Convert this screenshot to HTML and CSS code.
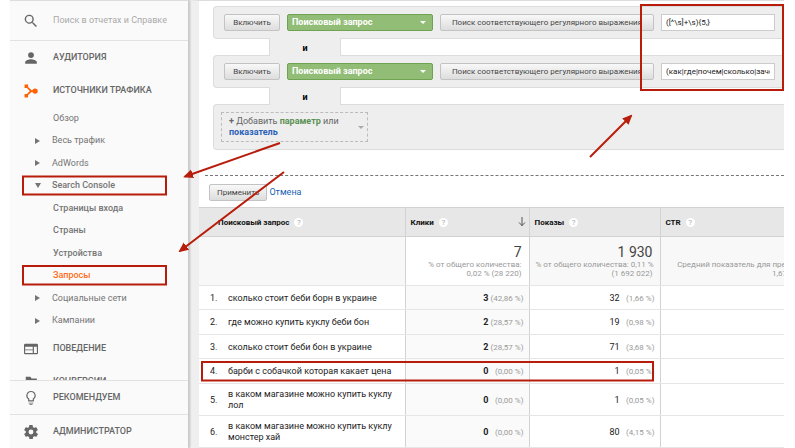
FILE: index.html
```
<!DOCTYPE html>
<html lang="ru">
<head>
    <meta charset="UTF-8">
    <meta name="viewport" content="width=device-width, initial-scale=1.0">
    <title>Поисковые запросы</title>
    <link rel="stylesheet" href="styles.css">
</head>
<body>
    <div class="app">
        <aside class="sidebar">
            <div class="search">
                <svg class="icon" viewBox="2 2 20 20"><path d="M15.500 14h-.8l-.3-.3A6.500 6.500 0 1 0 13.700 14.400l.3.3v.8l5 5 1.500-1.500-5-5zm-6 0a4.500 4.500 0 1 1 0-9 4.500 4.500 0 0 1 0 9z"/></svg>
                <input type="text" placeholder="Поиск в отчетах и Справке" aria-label="Поиск">
            </div>
            <nav class="menu">
                <a href="#" class="section">
                    <svg class="icon" viewBox="0 0 24 24"><circle cx="12" cy="7" r="5"/><path d="M2 22v-3c0-3.300 6.500-5 10-5s10 1.700 10 5v3z"/></svg>
                    АУДИТОРИЯ
                </a>
                <a href="#" class="section">
                    <svg class="icon icon-orange" viewBox="0 0 24 24"><path d="M1 1h6v4l6 5.500h4v3h-4L7 19v4H1v-6h4l5-5-5-5H1z"/><circle cx="19" cy="12" r="4.500"/></svg>
                    ИСТОЧНИКИ ТРАФИКА
                </a>
                <ul class="submenu">
                    <li><a href="#">Обзор</a></li>
                    <li><a href="#" class="closed">Весь трафик</a></li>
                    <li><a href="#" class="closed">AdWords</a></li>
                    <li><a href="#" class="open">Search Console</a></li>
                    <li><a href="#" class="child">Страницы входа</a></li>
                    <li><a href="#" class="child">Страны</a></li>
                    <li><a href="#" class="child">Устройства</a></li>
                    <li><a href="#" class="child current">Запросы</a></li>
                    <li><a href="#" class="closed">Социальные сети</a></li>
                    <li><a href="#" class="closed">Кампании</a></li>
                </ul>
                <a href="#" class="section">
                    <svg class="icon" viewBox="0 0 24 24"><path fill-rule="evenodd" d="M2 3h20a2 2 0 0 1 2 2v14a2 2 0 0 1-2 2H2a2 2 0 0 1-2-2V5a2 2 0 0 1 2-2zm0 5v5h13V8zm0 6v5h13v-5zm15-6v11h5V8z"/></svg>
                    ПОВЕДЕНИЕ
                </a>
                <a href="#" class="section">
                    <svg class="icon" viewBox="0 0 24 24"><path d="M3 3h8l2 3h9v15H3z"/></svg>
                    КОНВЕРСИИ
                </a>
            </nav>
            <div class="sidebar-footer">
                <a href="#" class="section">
                    <svg class="icon" viewBox="0 0 24 24"><path fill-rule="evenodd" d="M12 0a8 8 0 0 0-5 14.300V17a1 1 0 0 0 1 1h8a1 1 0 0 0 1-1v-2.700A8 8 0 0 0 12 0zm3 13v3H9v-3a6 6 0 1 1 6 0z"/><path d="M8 20h8v1.500H8zM9.500 22.500h5V24h-5z"/></svg>
                    РЕКОМЕНДУЕМ
                </a>
                <a href="#" class="section">
                    <svg class="icon" viewBox="2 2 20 20"><path fill-rule="evenodd" d="M19.400 13c.1-.7.1-1.300 0-2l2.100-1.600a.5.5 0 0 0 .1-.6l-2-3.500a.5.5 0 0 0-.6-.2l-2.500 1a7 7 0 0 0-1.700-1L14.400 2.400A.5.5 0 0 0 14 2h-4a.5.5 0 0 0-.5.4l-.4 2.700a7 7 0 0 0-1.700 1L5 5.100a.5.5 0 0 0-.6.2l-2 3.500a.5.5 0 0 0 .1.600L4.600 11a8 8 0 0 0 0 2l-2.100 1.600a.5.5 0 0 0-.1.600l2 3.500c.1.2.4.3.6.2l2.500-1a7 7 0 0 0 1.700 1l.4 2.700c0 .2.2.4.5.4h4c.2 0 .4-.2.500-.4l.4-2.700a7 7 0 0 0 1.700-1l2.500 1c.2.1.5 0 .6-.2l2-3.500a.5.5 0 0 0-.1-.6zM12 15.500a3.500 3.500 0 1 1 0-7 3.500 3.500 0 0 1 0 7z"/></svg>
                    АДМИНИСТРАТОР
                </a>
            </div>
        </aside>

        <main class="content">
            <div class="filters">
                <div class="filter">
                    <button type="button" class="btn">Включить</button>
                    <div class="dimension">
                        <select aria-label="Параметр">
                            <option>Поисковый запрос</option>
                        </select>
                    </div>
                    <button type="button" class="btn operator">Поиск соответствующего регулярного выражения</button>
                    <input type="text" class="pattern" aria-label="Выражение" value="([^\s]+\s){5,}">
                </div>
                <div class="and">и</div>
                <div class="filter">
                    <button type="button" class="btn">Включить</button>
                    <div class="dimension">
                        <select aria-label="Параметр">
                            <option>Поисковый запрос</option>
                        </select>
                    </div>
                    <button type="button" class="btn operator">Поиск соответствующего регулярного выражения</button>
                    <input type="text" class="pattern" aria-label="Выражение" value="(как|где|почем|сколько|зачем)">
                </div>
                <div class="and">и</div>
                <div class="filter filter-new">
                    <button type="button" class="add">
                        <span><b>+</b> Добавить <b class="green">параметр</b> или <b class="blue">показатель</b></span>
                    </button>
                </div>
            </div>

            <div class="actions">
                <button type="button" class="btn">Применить</button>
                <a href="#">Отмена</a>
            </div>

            <table class="report">
                <colgroup>
                    <col class="col-query">
                    <col class="col-clicks">
                    <col class="col-shows">
                    <col>
                </colgroup>
                <thead>
                    <tr>
                        <th class="query-head"><div class="head">Поисковый запрос <span class="help">?</span></div></th>
                        <th>
                            <div class="head">Клики <span class="help">?</span>
                                <svg class="sort" viewBox="0 0 8 10"><path d="M4 0v9M1 5.500l3 3 3-3"/></svg>
                            </div>
                        </th>
                        <th><div class="head">Показы <span class="help">?</span></div></th>
                        <th><div class="head">CTR <span class="help">?</span></div></th>
                    </tr>
                </thead>
                <tbody>
                    <tr class="summary">
                        <td></td>
                        <td class="sorted"><strong>7</strong>% от общего количества:<br>0,02 % (28 220)</td>
                        <td><strong>1 930</strong>% от общего количества: 0,11 %<br>(1 692 022)</td>
                        <td><strong>0,36 %</strong>Средний показатель для представления:<br>1,67 % (-78,24 %)</td>
                    </tr>
                    <tr>
                        <td><div class="query"><span>1.</span>сколько стоит беби борн в украине</div></td>
                        <td class="sorted"><b>3</b><small>(42,86 %)</small></td>
                        <td>32<small>(1,66 %)</small></td>
                        <td></td>
                    </tr>
                    <tr>
                        <td><div class="query"><span>2.</span>где можно купить куклу беби бон</div></td>
                        <td class="sorted"><b>2</b><small>(28,57 %)</small></td>
                        <td>19<small>(0,98 %)</small></td>
                        <td></td>
                    </tr>
                    <tr>
                        <td><div class="query"><span>3.</span>сколько стоит беби бон в украине</div></td>
                        <td class="sorted"><b>2</b><small>(28,57 %)</small></td>
                        <td>71<small>(3,68 %)</small></td>
                        <td></td>
                    </tr>
                    <tr>
                        <td><div class="query"><span>4.</span>барби с собачкой которая какает цена</div></td>
                        <td class="sorted"><b>0</b><small>(0,00 %)</small></td>
                        <td>1<small>(0,05 %)</small></td>
                        <td></td>
                    </tr>
                    <tr class="tall">
                        <td><div class="query"><span>5.</span>в каком магазине можно купить куклу лол</div></td>
                        <td class="sorted"><b>0</b><small>(0,00 %)</small></td>
                        <td>1<small>(0,05 %)</small></td>
                        <td></td>
                    </tr>
                    <tr class="tall">
                        <td><div class="query"><span>6.</span>в каком магазине можно купить куклу монстер хай</div></td>
                        <td class="sorted"><b>0</b><small>(0,00 %)</small></td>
                        <td>80<small>(4,15 %)</small></td>
                        <td></td>
                    </tr>
                </tbody>
            </table>
        </main>
    </div>

    <!-- Red marks over the report -->
    <svg class="marks" width="795" height="448" viewBox="0 0 795 448">
        <defs>
            <marker id="tip" markerUnits="userSpaceOnUse" markerWidth="10" markerHeight="10" refX="8" refY="4.500" orient="auto">
                <path class="tip" d="M0 0l10 4.500-10 4.500z"/>
            </marker>
        </defs>
        <rect x="641" y="5" width="142" height="85"/>
        <rect x="23" y="176.500" width="143" height="18"/>
        <rect x="23" y="266" width="143" height="18.500"/>
        <rect x="202" y="362" width="451" height="18.500"/>
        <path marker-end="url(#tip)" d="M280 143L185 176.500"/>
        <path marker-end="url(#tip)" d="M284 172L180 251"/>
        <path marker-end="url(#tip)" d="M590 157L631 116"/>
    </svg>
</body>
</html>
```
FILE: styles.css
```
* {
    margin: 0;
    padding: 0;
    box-sizing: border-box;
}
body {
    background: #fff;
    color: #222;
    font-family: Roboto, "Liberation Sans", sans-serif;
    font-size: 9px;
    line-height: 11px;
    height: 100vh;
    overflow: hidden;
}
button, input, select {
    font: inherit;
    color: inherit;
}
a {
    text-decoration: none;
}
.app {
    display: flex;
    height: 100vh;
    margin: 0 11px 0 10px;
}

/* Sidebar */
.sidebar {
    flex: 0 0 179px;
    min-width: 0;
    display: flex;
    flex-direction: column;
    background: #fafafa;
    color: #666;
    border-top: 1px solid #ddd;
    border-right: 1px solid #ccc;
    box-shadow: 1px 0 2px rgba(0, 0, 0, 0.2);
    z-index: 1;
}
.icon {
    flex: 0 0 14px;
    height: 14px;
    margin-right: 15px;
    fill: #666;
}
.icon-orange {
    fill: #ff6000;
}
.search {
    display: flex;
    align-items: center;
    height: 40px;
    padding: 0 21px 0 14px;
    border-bottom: 1px solid #e2e2e2;
}
.search input {
    flex: 1;
    min-width: 0;
    border: none;
    background: none;
    outline: none;
}
.search input::placeholder {
    color: #aaa;
}
.menu {
    flex: 1;
    min-height: 0;
    overflow: hidden;
}
.section {
    display: flex;
    align-items: center;
    height: 33px;
    padding-left: 14px;
    color: #666;
    font-weight: 500;
}
.submenu {
    list-style: none;
}
.submenu a {
    display: flex;
    align-items: center;
    height: 22px;
    padding-left: 43px;
    color: #757575;
}
.submenu li:nth-child(even) a {
    height: 23px;
}
.submenu .closed,
.submenu .open {
    padding-left: 25px;
}
.closed::before {
    content: "";
    margin-right: 12px;
    border-left: 5px solid #757575;
    border-top: 3px solid transparent;
    border-bottom: 3px solid transparent;
}
.open::before {
    content: "";
    margin-right: 11px;
    border-top: 5px solid #757575;
    border-left: 3px solid transparent;
    border-right: 3px solid transparent;
}
.submenu .open,
.submenu .child {
    font-weight: 500;
}
.submenu .current {
    color: #ff6c1a;
}
.sidebar-footer .section {
    height: 34px;
    border-top: 1px solid #e2e2e2;
}

/* Filters */
.content {
    flex: 1;
    min-width: 0;
    overflow: hidden;
    border-left: 10px solid #efefef;
    border-top: 1px solid #ddd;
}
.filters {
    padding: 5px 0 0 14px;
}
.filter {
    display: flex;
    align-items: center;
    gap: 7px;
    height: 33px;
    padding: 0 9px 0 10px;
    background: #eee;
    border: 1px solid #dcdcdc;
    border-right: none;
    border-radius: 4px 0 0 4px;
}
.and {
    position: relative;
    width: 72px;
    height: 18px;
    margin: -1px 0 -1px 56px;
    background: #eee;
    border: 1px solid #dcdcdc;
    border-width: 0 1px;
    color: #000;
    font-weight: bold;
    line-height: 20px;
    text-align: center;
}
.btn {
    min-width: 56px;
    height: 17px;
    padding: 0 7px;
    background: linear-gradient(#f8f8f8, #ddd);
    border: 1px solid #c3c3c3;
    border-radius: 2px;
    color: #444;
    font-size: 8px;
    white-space: nowrap;
}
.operator {
    flex: 0 0 214px;
}
.dimension {
    position: relative;
    flex: 0 0 146px;
}
.dimension select {
    display: block;
    width: 100%;
    height: 17px;
    padding: 0 4px;
    appearance: none;
    background: #91bd76;
    border: 1px solid #6fa251;
    border-radius: 2px;
    color: #fff;
    font-weight: bold;
}
.dimension::after {
    content: "";
    position: absolute;
    top: 7px;
    right: 7px;
    border-top: 3px solid #fff;
    border-left: 3px solid transparent;
    border-right: 3px solid transparent;
    pointer-events: none;
}
.pattern {
    flex: 1;
    min-width: 0;
    height: 17px;
    padding: 0 4px;
    background: #fff;
    border: 1px solid #ccc;
    font-size: 8px;
}
.filter-new {
    height: 46px;
    padding-left: 7px;
}
.add {
    display: flex;
    align-items: center;
    width: 147px;
    height: 30px;
    padding: 0 3px 0 7px;
    background: none;
    border: 1px dashed #bbb;
    color: #666;
    text-align: left;
}
.add span {
    flex: 1;
}
.add::after {
    content: "";
    border-top: 3px solid #aaa;
    border-left: 3px solid transparent;
    border-right: 3px solid transparent;
}
.green {
    color: #5a9152;
}
.blue {
    color: #2a62b8;
}
.actions {
    display: flex;
    gap: 2px;
    margin: 25px 0 0 6px;
    padding: 8px 0 6px 4px;
    border-top: 1px dashed #777;
}
.actions a {
    color: #1a5fb4;
    line-height: 17px;
}

/* Report */
.report {
    width: 100%;
    min-width: 641px;
    table-layout: fixed;
    border-collapse: collapse;
}
.col-query {
    width: 206px;
}
.col-clicks {
    width: 124px;
}
.col-shows {
    width: 131px;
}
th {
    height: 29px;
    padding: 0 3px 0 5px;
    background: #e7e7e7;
    border: 1px solid #d2d2d2;
    color: #111;
    font-size: 8px;
    text-align: left;
}
th:first-child,
td:first-child {
    border-left: none;
}
.query-head {
    padding-left: 19px;
}
.head {
    display: flex;
    align-items: center;
}
.help {
    width: 9px;
    height: 9px;
    margin-left: 5px;
    border-radius: 50%;
    background: #fff;
    color: #aaa;
    font-weight: normal;
    line-height: 9px;
    text-align: center;
}
.sort {
    width: 8px;
    height: 10px;
    margin-left: auto;
    fill: none;
    stroke: #555;
}
td {
    height: 24px;
    padding: 1px 5px 0;
    border: 1px solid #e6e6e6;
    border-left-color: #d2d2d2;
    border-right-color: #d2d2d2;
    text-align: right;
}
tr:nth-child(odd) td {
    height: 25px;
}
.tall td,
.tall:nth-child(odd) td {
    height: 32px;
}
.sorted {
    background: #fafafa;
}
tr.summary td {
    height: 49px;
    padding: 0 7px 0 6px;
    background: #f8f8f8;
    color: #999;
    font-size: 8px;
    line-height: 9px;
    white-space: nowrap;
}
tr.summary .sorted {
    background: #fff;
}
.summary strong {
    display: block;
    color: #444;
    font-size: 14px;
    font-weight: normal;
    line-height: 16px;
}
.query {
    display: flex;
    align-items: center;
    text-align: left;
}
.query span {
    flex: 0 0 18px;
    margin-left: 6px;
}
td small {
    display: inline-block;
    min-width: 35px;
    color: #999;
    font-size: 8px;
}

.marks {
    position: absolute;
    top: 0;
    left: 0;
    z-index: 2;
    fill: none;
    stroke: #b81c0a;
    stroke-width: 2;
    pointer-events: none;
}
.tip {
    fill: #b81c0a;
    stroke: none;
}
```
